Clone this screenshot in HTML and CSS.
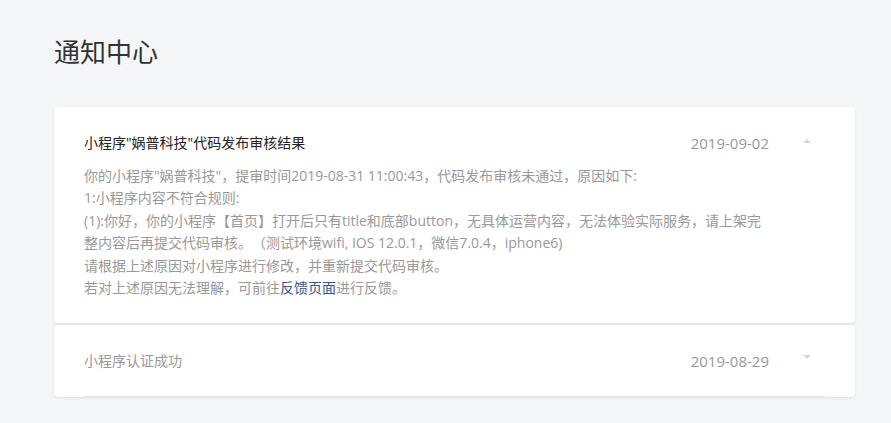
FILE: index.html
```html
<!DOCTYPE html>
<html lang="zh-CN">
<head>
  <meta charset="UTF-8" />
  <meta name="viewport" content="width=device-width, initial-scale=1.0" />
  <title>通知中心</title>
  <link rel="stylesheet" href="styles.css">
</head>
<body>
  <div class="page">
    <h1 class="page-title">通知中心</h1>

    <div class="notice open">
      <div class="notice-head">
        <div class="notice-title">小程序"娲普科技"代码发布审核结果</div>
        <div class="notice-date">2019-09-02</div>
        <span class="caret up"></span>
      </div>
      <div class="notice-body">
        <p>你的小程序"娲普科技"，提审时间2019-08-31 11:00:43，代码发布审核未通过，原因如下:</p>
        <p>1:小程序内容不符合规则:</p>
        <p>(1):你好，你的小程序【首页】打开后只有title和底部button，无具体运营内容，无法体验实际服务，请上架完整内容后再提交代码审核。（测试环境wifi, IOS 12.0.1，微信7.0.4，iphone6)</p>
        <p>请根据上述原因对小程序进行修改，并重新提交代码审核。</p>
        <p>若对上述原因无法理解，可前往<a href="#" class="link">反馈页面</a>进行反馈。</p>
      </div>
    </div>

    <div class="notice">
      <div class="notice-head read">
        <div class="notice-title">小程序认证成功</div>
        <div class="notice-date">2019-08-29</div>
        <span class="caret down"></span>
      </div>
    </div>
  </div>
</body>
</html>
```

FILE: styles.css
```css
body {
  margin: 0;
  padding: 0;
  background-color: #f5f6f8;
  font-family: "Open Sans", "Noto Sans CJK SC", sans-serif;
  color: #333;
  text-spacing-trim: space-all;
}
.page {
  padding: 33px 36px 20px 54px;
}
.page-title {
  margin: 0 0 38px 0;
  font-size: 26px;
  line-height: 36px;
  font-weight: normal;
  color: #333;
  font-family: "Noto Sans CJK SC", sans-serif;
}
.notice {
  background-color: #fff;
  border-radius: 4px;
  box-shadow: 0 1px 3px rgba(0, 0, 0, 0.1);
  margin-bottom: 2px;
  padding: 0 30px;
}
.notice-head {
  display: flex;
  align-items: center;
  padding: 25px 0;
  font-size: 14px;
  line-height: 22px;
}
.notice-head.read {
  border-bottom: 1px solid #e4e4e6;
  padding-bottom: 24px;
}
.notice.open .notice-head {
  padding-bottom: 11px;
}
.notice-title {
  flex: 1;
  color: #222;
}
.notice-head.read .notice-title {
  color: #999;
}
.notice-date {
  color: #999;
  font-size: 15px;
}
.caret {
  width: 0;
  height: 0;
  margin: 0 14px 0 34px;
  border-left: 4px solid transparent;
  border-right: 4px solid transparent;
}
.caret.up {
  border-bottom: 4px solid #d6d6d6;
  margin-top: -4px;
}
.caret.down {
  border-top: 4px solid #d6d6d6;
  margin-top: -8px;
}
.notice-body {
  width: 686px;
  padding-bottom: 24px;
  font-size: 14px;
  line-height: 22.4px;
  color: #999;
}
.notice-body p {
  margin: 0;
}
.link {
  color: #34548f;
  text-decoration: none;
}
```
